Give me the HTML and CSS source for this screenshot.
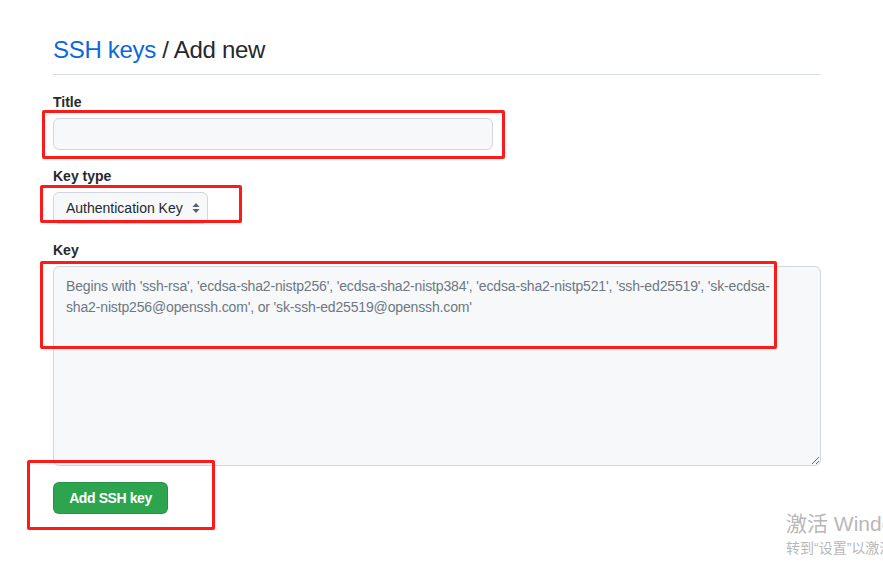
FILE: index.html
```html
<!DOCTYPE html>
<html lang="en">
<head>
    <meta charset="UTF-8">
    <meta name="viewport" content="width=device-width, initial-scale=1.0">
    <title>SSH keys / Add new</title>
    <link rel="stylesheet" href="styles.css">
</head>
<body>
    <div class="page">
        <h2 class="subhead"><a href="#">SSH keys</a> / Add new</h2>

        <form class="key-form">
            <label class="form-label" for="title">Title</label>
            <input class="form-control title-input" type="text" id="title">

            <label class="form-label" for="keytype">Key type</label>
            <div class="select-wrap">
                <select class="form-select" id="keytype">
                    <option>Authentication Key</option>
                    <option>Signing Key</option>
                </select>
                <svg class="select-arrows" width="8" height="12" viewBox="0 0 8 12">
                    <path d="M4 1 L7.5 5 H0.5 Z M4 11 L0.5 7 H7.5 Z" fill="#57606a"/>
                </svg>
            </div>

            <label class="form-label" for="key">Key</label>
            <textarea class="form-control key-input" id="key" placeholder="Begins with 'ssh-rsa', 'ecdsa-sha2-nistp256', 'ecdsa-sha2-nistp384', 'ecdsa-sha2-nistp521', 'ssh-ed25519', 'sk-ecdsa-sha2-nistp256@openssh.com', or 'sk-ssh-ed25519@openssh.com'"></textarea>

            <div class="actions">
                <button type="button" class="btn-primary">Add SSH key</button>
            </div>
        </form>

        <!-- red annotation boxes drawn on top of the screenshot -->
        <div class="mark mark-title"></div>
        <div class="mark mark-type"></div>
        <div class="mark mark-key"></div>
        <div class="mark mark-btn"></div>
    </div>

    <div class="watermark">
        <div class="wm-big">激活 Windows</div>
        <div class="wm-small">转到“设置”以激活 Windows。</div>
    </div>
</body>
</html>
```

FILE: styles.css
```css
*{
    margin: 0;
    padding: 0;
    box-sizing: border-box;
}

html, body{
    width: 883px;
    height: 561px;
    overflow: hidden;
}

body{
    background: #ffffff;
    font-family: "Liberation Sans", Arial, sans-serif;
    font-size: 14px;
    line-height: 21px;
    color: #24292f;
    position: relative;
}

.page{
    position: relative;
    width: 883px;
    height: 561px;
    padding: 32px 62px 0 53px;
}

.subhead{
    font-size: 24px;
    line-height: 36px;
    font-weight: 400;
    letter-spacing: -0.3px;
    color: #24292f;
    padding-bottom: 6px;
    border-bottom: 1px solid #d8dee4;
}

.subhead a{
    color: #0969da;
    text-decoration: none;
}

.key-form{
    display: flex;
    flex-direction: column;
    align-items: flex-start;
}

.form-label{
    display: block;
    font-weight: 700;
    font-size: 14px;
    line-height: 21px;
    margin-top: 16px;
    margin-bottom: 5px;
}

.key-form .form-label:first-child{
    margin-top: 17px;
}

.form-control{
    font-family: inherit;
    font-size: 14px;
    line-height: 21px;
    color: #24292f;
    background: #f6f8fa;
    border: 1px solid #d0d7de;
    border-radius: 6px;
    padding: 5px 12px;
    outline: none;
}

.title-input{
    width: 440px;
    height: 32px;
}

.select-wrap{
    position: relative;
    width: 155px;
    height: 32px;
}

.form-select{
    appearance: none;
    -webkit-appearance: none;
    width: 155px;
    height: 32px;
    font-family: inherit;
    font-size: 14px;
    color: #24292f;
    background: #f6f8fa;
    border: 1px solid #d0d7de;
    border-radius: 6px;
    padding: 0 24px 0 12px;
    outline: none;
}

.select-arrows{
    position: absolute;
    right: 8px;
    top: 10px;
    pointer-events: none;
}

.key-input{
    width: 768px;
    height: 200px;
    padding: 9px 40px 9px 12px;
    letter-spacing: -0.15px;
    resize: vertical;
}

.key-input::placeholder{
    color: #6e7781;
}

.actions{
    margin-top: 16px;
}

.btn-primary{
    font-family: inherit;
    font-size: 14px;
    font-weight: 700;
    letter-spacing: -0.4px;
    color: #ffffff;
    background: #2da44e;
    border: 1px solid rgba(27, 31, 36, 0.15);
    border-radius: 6px;
    width: 115px;
    height: 32px;
    padding: 0;
    cursor: pointer;
}

.mark{
    position: absolute;
    border: 3px solid #ff1a1a;
    border-radius: 2px;
    pointer-events: none;
}

.mark-title{ left: 42px; top: 110px; width: 463px; height: 49px; }
.mark-type{ left: 40px; top: 185px; width: 202px; height: 38px; }
.mark-key{ left: 40px; top: 261px; width: 737px; height: 88px; }
.mark-btn{ left: 27px; top: 460px; width: 188px; height: 70px; }

.watermark{
    position: absolute;
    left: 786px;
    top: 510px;
    white-space: nowrap;
    color: #b8b8b8;
    font-family: "Liberation Sans", "Noto Sans CJK SC", sans-serif;
}

.wm-big{
    font-size: 21px;
    line-height: 28px;
}

.wm-small{
    font-size: 14px;
    line-height: 20px;
    margin-top: 0;
}
```
